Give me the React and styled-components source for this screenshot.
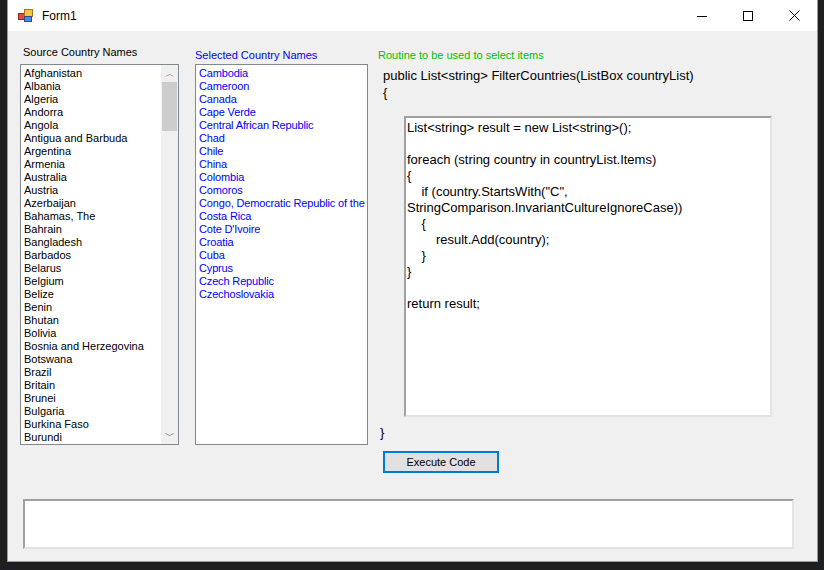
import React from 'react'
import styled, { createGlobalStyle } from 'styled-components'

const Global = createGlobalStyle`
  body { margin: 0; background: #1f1f1f; font-family: "Liberation Sans", Arial, sans-serif; }
`

const source = ['Afghanistan','Albania','Algeria','Andorra','Angola','Antigua and Barbuda','Argentina','Armenia','Australia','Austria','Azerbaijan','Bahamas, The','Bahrain','Bangladesh','Barbados','Belarus','Belgium','Belize','Benin','Bhutan','Bolivia','Bosnia and Herzegovina','Botswana','Brazil','Britain','Brunei','Bulgaria','Burkina Faso','Burundi']
const selected = ['Cambodia','Cameroon','Canada','Cape Verde','Central African Republic','Chad','Chile','China','Colombia','Comoros','Congo, Democratic Republic of the','Costa Rica',"Cote D'Ivoire",'Croatia','Cuba','Cyprus','Czech Republic','Czechoslovakia']

const code = `List<string> result = new List<string>();

foreach (string country in countryList.Items)
{
    if (country.StartsWith("C",
StringComparison.InvariantCultureIgnoreCase))
    {
        result.Add(country);
    }
}

return result;`

const Window = styled.div`
  margin-left: 7px;
  width: 809px;
  height: 561px;
  border: 1px solid #6aa5dc;
  border-top: none;
  background: #f0f0f0;
  display: flex;
  flex-direction: column;
`
const TitleBar = styled.div`
  height: 31px;
  background: #fff;
  display: flex;
  align-items: center;
  font-size: 12px;
  color: #000;
`
const Title = styled.span`
  margin-left: 9px;
  flex: 1;
`
const Ctrl = styled.div`
  width: 46px;
  height: 31px;
  display: flex;
  align-items: center;
  justify-content: center;
`
const Client = styled.div`
  display: flex;
  flex-direction: column;
  padding-left: 12px;
`
const Row = styled.div`
  display: flex;
`
const Column = styled.div`
  display: flex;
  flex-direction: column;
  width: ${p => p.$w}px;
  margin-left: ${p => p.$ml || 0}px;
`
const Label = styled.div`
  font-size: 11px;
  line-height: 13px;
  color: ${p => p.$color};
  padding-top: ${p => p.$pt}px;
  height: ${p => p.$h}px;
  padding-left: ${p => p.$pl || 0}px;
  box-sizing: border-box;
`
const ListBox = styled.div`
  height: 381px;
  border: 1px solid #828790;
  background: #fff;
  box-sizing: border-box;
  display: flex;
  overflow: hidden;
`
const Items = styled.div`
  flex: 1;
  padding: 2px 0 0 3px;
  font-size: 11px;
  line-height: 13px;
  letter-spacing: ${p => p.$ls || 0}px;
  color: ${p => p.$color};
  white-space: nowrap;
  overflow: hidden;
`
const Scroll = styled.div`
  width: 17px;
  background: #f0f0f0;
  display: flex;
  flex-direction: column;
  align-items: center;
  font-size: 10px;
  color: #606060;
`
const Arrow = styled.div`
  height: 17px;
  display: flex;
  align-items: center;
  justify-content: center;
`
const Thumb = styled.div`
  width: 15px;
  height: 49px;
  background: #cdcdcd;
`
const Header = styled.div`
  font-size: 13px;
  line-height: 17px;
  padding-left: 5px;
  margin-top: 5px;
  white-space: pre;
  color: #000;
`
const CodeBox = styled.div`
  margin: 15px 0 0 26px;
  width: 368px;
  height: 301px;
  box-sizing: border-box;
  background: #fff;
  border: 2px solid #a0a0a0;
  border-right-color: #e3e3e3;
  border-bottom-color: #e3e3e3;
  padding: 2px 0 0 1px;
  font-size: 13px;
  line-height: 16px;
  white-space: pre;
  color: #000;
`
const Brace = styled.div`
  font-size: 13px;
  margin: 8px 0 0 2px;
  height: 18px;
`
const Button = styled.button`
  margin: 8px 0 0 5px;
  width: 116px;
  height: 22px;
  border: 2px solid #0078d7;
  background: #e1e1e1;
  font-family: inherit;
  font-size: 11px;
  padding: 0;
  color: #000;
`
const Output = styled.div`
  margin: 26px 0 0 3px;
  width: 771px;
  height: 50px;
  box-sizing: border-box;
  background: #fff;
  border: 2px solid #a0a0a0;
  border-right-color: #e3e3e3;
  border-bottom-color: #e3e3e3;
`

const AppIcon = () => (
  <svg width="15" height="13" viewBox="0 0 15 13" style={{ marginLeft: 10 }}>
    <rect x="0.5" y="4.5" width="6" height="6" fill="#e84a3a" stroke="#8a2a2a" />
    <rect x="6.5" y="0.5" width="8" height="7" fill="#f5c542" stroke="#9a7a20" />
    <rect x="6.5" y="7.5" width="7" height="5" fill="#4a8ae0" stroke="#2a4a8a" />
  </svg>
)

export default function App() {
  return (
    <>
      <Global />
      <Window>
        <TitleBar>
          <AppIcon />
          <Title>Form1</Title>
          <Ctrl><svg width="10" height="10"><path d="M0 5.5h10" stroke="#000" /></svg></Ctrl>
          <Ctrl><svg width="10" height="10"><rect x="0.5" y="0.5" width="9" height="9" fill="none" stroke="#000" /></svg></Ctrl>
          <Ctrl><svg width="11" height="11"><path d="M0.5 0.5l10 10M10.5 0.5l-10 10" stroke="#000" /></svg></Ctrl>
        </TitleBar>
        <Client>
          <Row>
            <Column $w={159}>
              <Label $pt={15} $h={33} $pl={3}>Source Country Names</Label>
              <ListBox>
                <Items $color="#000">{source.map(s => <div key={s}>{s}</div>)}</Items>
                <Scroll>
                  <Arrow>︿</Arrow>
                  <Thumb />
                  <div style={{ flex: 1 }} />
                  <Arrow>﹀</Arrow>
                </Scroll>
              </ListBox>
            </Column>
            <Column $w={173} $ml={16}>
              <Label $pt={18} $h={33} $color="#0000ff">Selected Country Names</Label>
              <ListBox>
                <Items $color="#0000ff" $ls={-0.15}>{selected.map(s => <div key={s}>{s}</div>)}</Items>
              </ListBox>
            </Column>
            <Column $w={420} $ml={10}>
              <Label $pt={18} $h={31} $color="#00c000">Routine to be used to select items</Label>
              <Header>{'public List<string> FilterCountries(ListBox countryList)\n{'}</Header>
              <CodeBox>{code}</CodeBox>
              <Brace>{'}'}</Brace>
              <Button>Execute Code</Button>
            </Column>
          </Row>
          <Output />
        </Client>
      </Window>
    </>
  )
}
